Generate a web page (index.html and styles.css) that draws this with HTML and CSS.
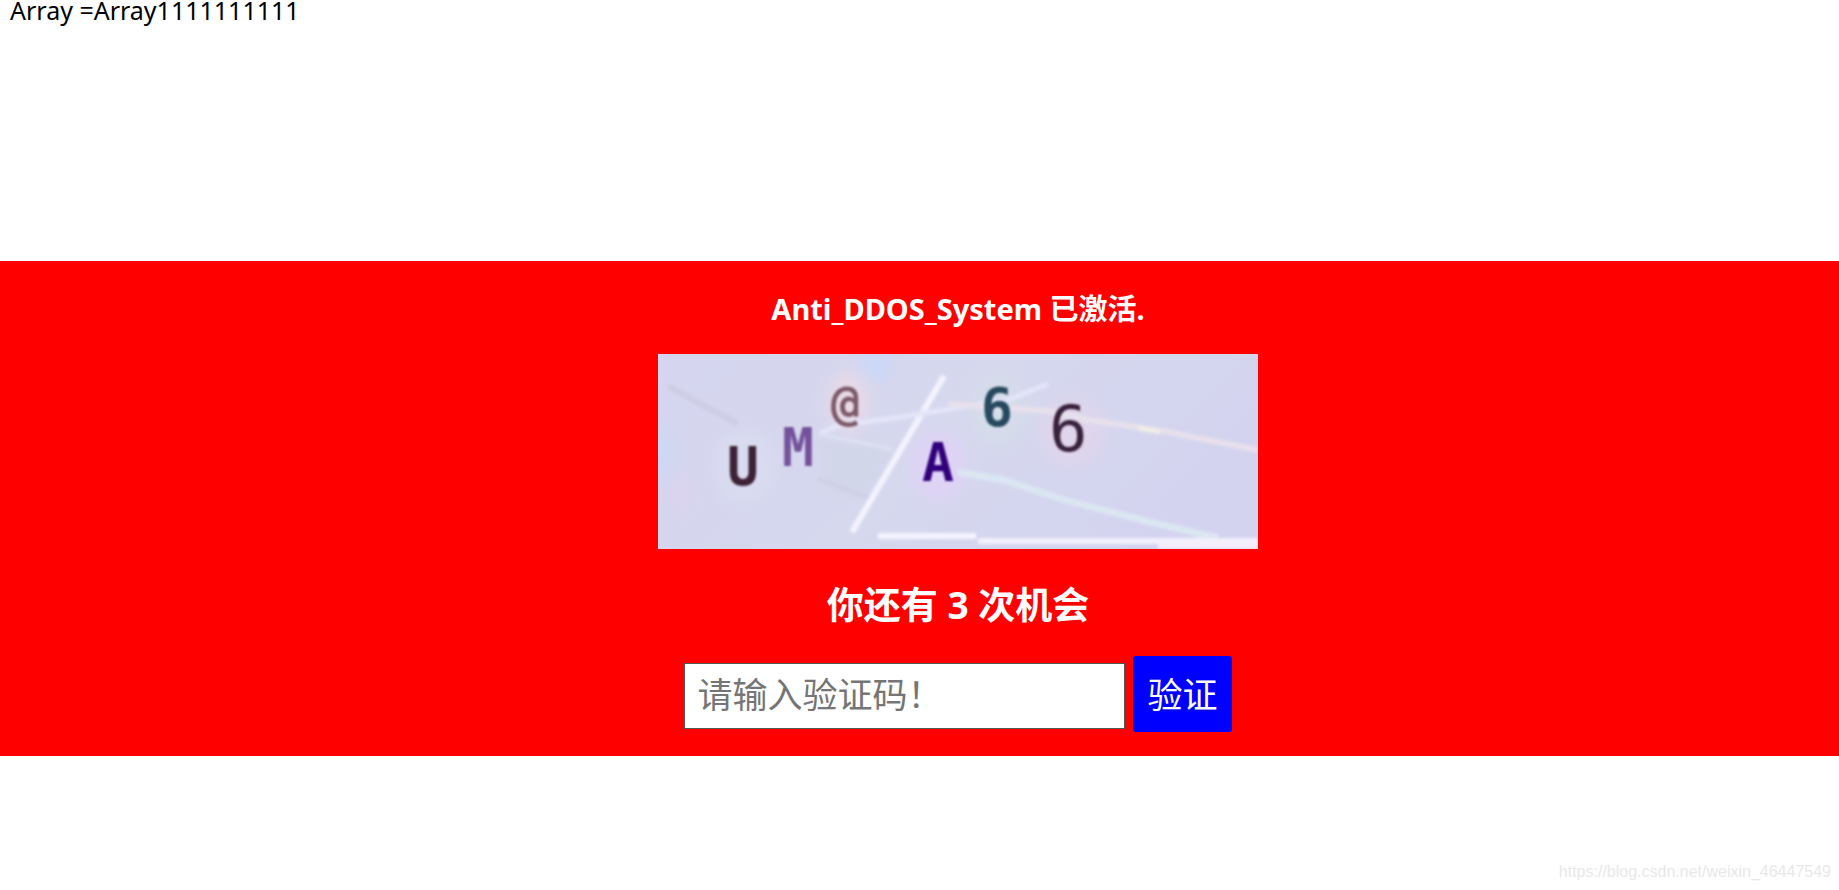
FILE: index.html
```html
<!DOCTYPE html>
<html lang="zh-CN">
<head>
	<meta charset="UTF-8">
	<title>Anti_DDOS_System</title>
	<link rel="stylesheet" href="styles.css">
</head>
<body>
	<p class="output">Array =Array1111111111</p>
	<form class="verify">
		<h4 class="title">Anti_DDOS_System 已激活.</h4>
		<svg class="captcha" viewBox="0 0 600 195">
			<defs>
				<linearGradient id="bg" x1="0" y1="0" x2="1" y2="0.3">
					<stop offset="0" stop-color="#d5d5ef"/>
					<stop offset="0.55" stop-color="#d6d8ee"/>
					<stop offset="1" stop-color="#d3d3ef"/>
				</linearGradient>
				<filter id="soft"><feGaussianBlur stdDeviation="1"/></filter>
				<filter id="lines" x="0" y="0" width="600" height="195" filterUnits="userSpaceOnUse"><feGaussianBlur stdDeviation="1.5"/></filter>
				<filter id="glow"><feGaussianBlur stdDeviation="8"/></filter>
			</defs>
			<rect width="600" height="195" fill="url(#bg)"/>
			<!-- 底色 -->
			<g filter="url(#glow)">
				<ellipse cx="4" cy="100" rx="12" ry="26" fill="#ccd9f1"/>
				<ellipse cx="22" cy="140" rx="10" ry="26" fill="#dcd3ef"/>
				<ellipse cx="86" cy="112" rx="30" ry="36" fill="#d9dcf0"/>
				<ellipse cx="190" cy="48" rx="20" ry="30" fill="#e8d9e6"/>
				<ellipse cx="218" cy="12" rx="16" ry="12" fill="#c9d8fb"/>
				<ellipse cx="280" cy="112" rx="28" ry="34" fill="#dfd3f6"/>
				<ellipse cx="340" cy="55" rx="28" ry="36" fill="#d5dcea"/>
				<ellipse cx="415" cy="78" rx="32" ry="34" fill="#dfd5ec"/>
				<path d="M165 85L235 95L210 145L165 130Z" fill="#d1d6e8"/>
			</g>
			<!-- 干扰线 -->
			<g filter="url(#lines)" fill="none">
				<path d="M10 32L80 70" stroke="#cdcee6" stroke-width="6"/>
				<path d="M160 125L215 145" stroke="#cfd0e6" stroke-width="5"/>
				<path d="M286 22L194 178" stroke="#f4f3ff" stroke-width="6"/>
				<path d="M162 80L178 72L250 62L310 52L350 46L390 30" stroke="#e4e5fa" stroke-width="5"/>
				<path d="M290 50L390 57L430 66L505 77L600 96" stroke="#e7e0ec" stroke-width="6"/>
				<path d="M480 74L502 78" stroke="#f0ece8" stroke-width="5"/>
				<path d="M300 118L345 126L410 147L500 170L560 184" stroke="#dbe6f3" stroke-width="7"/>
				<path d="M160 80L235 95" stroke="#dddff2" stroke-width="4"/>
				<path d="M220 182H318" stroke="#f4f3ff" stroke-width="6"/>
				<path d="M320 187H600" stroke="#f2f0fc" stroke-width="6"/>
				<path d="M500 192H600" stroke="#f7ecfa" stroke-width="6"/>
			</g>
			<g class="code" filter="url(#soft)">
				<text x="69" y="131" fill="#3c2435">U</text>
				<text x="124" y="112" fill="#74519b">M</text>
				<text class="at" x="173" y="66" fill="#7d5a69">@</text>
				<text x="264" y="127" fill="#32007c">A</text>
				<text x="323" y="72" fill="#27495f">6</text>
				<text class="thin" x="391" y="97" fill="#37203b">6</text>
			</g>
		</svg>
		<h3 class="chance">你还有 3 次机会</h3>
		<div class="row">
			<input class="text" type="text" placeholder="请输入验证码！" aria-label="验证码">
			<button class="btn" type="submit">验证</button>
		</div>
	</form>
	<a class="link" href="https://blog.csdn.net/weixin_46447549">https://blog.csdn.net/weixin_46447549</a>
</body>
</html>
```
FILE: styles.css
```css
*{
	margin:0;
	padding:0;
	box-sizing: border-box;
}
body{
	min-height: 100vh;
	display: flex;
	flex-direction: column;
	background: #fff;
	font-family: "Noto Sans", "Noto Sans CJK SC", sans-serif;
}
.output{
	padding-left: 10px;
	font-size: 25px;
	line-height: 20px;
	color: #000;
}
.verify{
	margin-top: 241px;
	padding: 32px 0 24px 77px;
	display: flex;
	flex-direction: column;
	align-items: center;
	background: #f00;
	color: #fff;
}
.title{
	font-size: 29px;
	line-height: 32px;
}
.captcha{
	width: 600px;
	max-width: 100%;
	margin-top: 29px;
	display: block;
}
.code{
	font-family: "DejaVu Sans Mono", monospace;
	font-size: 53px;
	font-weight: bold;
}
.code .at{
	font-size: 48px;
}
.code .thin{
	font-size: 64px;
	font-weight: normal;
}
.chance{
	margin: 34px 0 29px;
	font-size: 37px;
	line-height: 44px;
}
.row{
	display: flex;
	align-items: baseline;
	gap: 8px;
}
.text{
	width: 441px;
	height: 66px;
	padding: 0 12px 4px;
	border: 1px solid #555;
	background: #fff;
	font-family: inherit;
	font-size: 35px;
	color: #000;
}
.text::placeholder{
	color: #757575;
}
.btn{
	height: 76px;
	padding: 0 14px 4px;
	border: none;
	border-radius: 3px;
	background: #00f;
	font-family: inherit;
	font-size: 35px;
	color: #fff;
	cursor: pointer;
}
.link{
	margin-top: auto;
	padding: 0 8px 8px 0;
	align-self: flex-end;
	font-family: "Liberation Sans", Arial, sans-serif;
	font-size: 16px;
	line-height: 20px;
	color: #e8e8e8;
	text-decoration: none;
}
```
